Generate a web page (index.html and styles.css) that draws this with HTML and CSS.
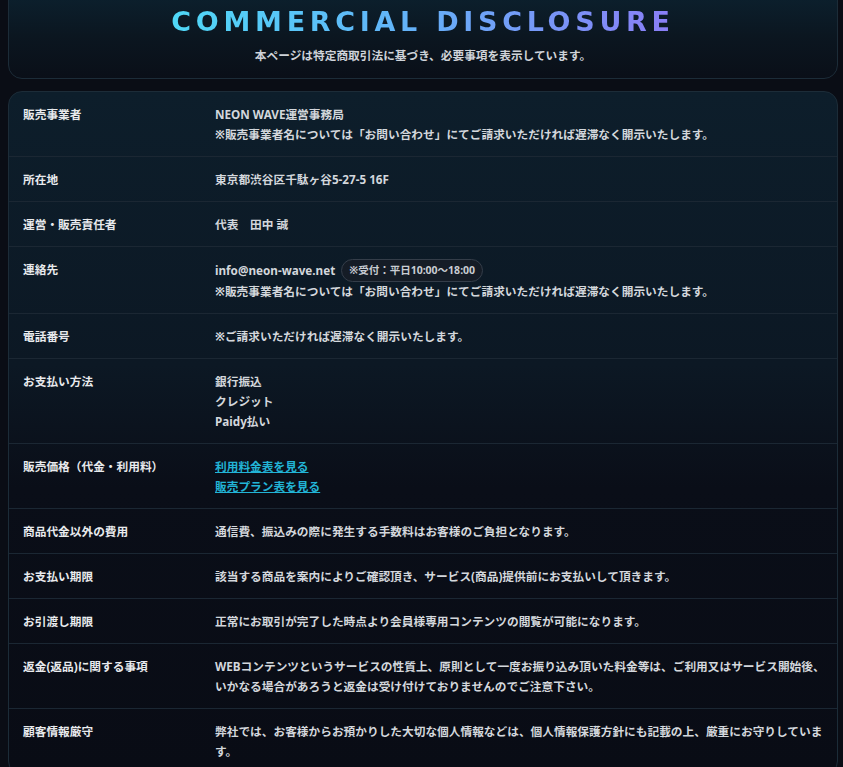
FILE: index.html
```html
<html>
  <head>
    <meta charset="utf-8">
    <link rel="stylesheet" href="styles.css">
  </head>
  <body>
    <div class="page">
      <div class="hero">
        <h1 class="hero-title">COMMERCIAL DISCLOSURE</h1>
        <p class="hero-sub">本ページは特定商取引法に基づき、必要事項を表示しています。</p>
      </div>

      <div class="table">
        <div class="row">
          <div class="label">販売事業者</div>
          <div class="value">
            <div>NEON WAVE運営事務局</div>
            <div>※販売事業者名については「お問い合わせ」にてご請求いただければ遅滞なく開示いたします。</div>
          </div>
        </div>
        <div class="row">
          <div class="label">所在地</div>
          <div class="value">東京都渋谷区千駄ヶ谷5-27-5 16F</div>
        </div>
        <div class="row">
          <div class="label">運営・販売責任者</div>
          <div class="value">代表　田中 誠</div>
        </div>
        <div class="row">
          <div class="label">連絡先</div>
          <div class="value">
            <div class="contact">info@neon-wave.net <span class="pill">※受付：平日10:00〜18:00</span></div>
            <div>※販売事業者名については「お問い合わせ」にてご請求いただければ遅滞なく開示いたします。</div>
          </div>
        </div>
        <div class="row">
          <div class="label">電話番号</div>
          <div class="value">※ご請求いただければ遅滞なく開示いたします。</div>
        </div>
        <div class="row">
          <div class="label">お支払い方法</div>
          <div class="value">
            <div>銀行振込</div>
            <div>クレジット</div>
            <div>Paidy払い</div>
          </div>
        </div>
        <div class="row">
          <div class="label">販売価格（代金・利用料）</div>
          <div class="value">
            <div><a class="link" href="#">利用料金表を見る</a></div>
            <div><a class="link" href="#">販売プラン表を見る</a></div>
          </div>
        </div>
        <div class="row">
          <div class="label">商品代金以外の費用</div>
          <div class="value">通信費、振込みの際に発生する手数料はお客様のご負担となります。</div>
        </div>
        <div class="row">
          <div class="label">お支払い期限</div>
          <div class="value">該当する商品を案内によりご確認頂き、サービス(商品)提供前にお支払いして頂きます。</div>
        </div>
        <div class="row">
          <div class="label">お引渡し期限</div>
          <div class="value">正常にお取引が完了した時点より会員様専用コンテンツの閲覧が可能になります。</div>
        </div>
        <div class="row">
          <div class="label">返金(返品)に関する事項</div>
          <div class="value">WEBコンテンツというサービスの性質上、原則として一度お振り込み頂いた料金等は、ご利用又はサービス開始後、いかなる場合があろうと返金は受け付けておりませんのでご注意下さい。</div>
        </div>
        <div class="row">
          <div class="label">顧客情報厳守</div>
          <div class="value">弊社では、お客様からお預かりした大切な個人情報などは、個人情報保護方針にも記載の上、厳重にお守りしています。</div>
        </div>
      </div>
    </div>
  </body>
</html>
```

FILE: styles.css
```css
body {
  margin: 0;
  background-color: #0a0d15;
  color: #d6dae0;
  font-family: "Noto Sans", "Noto Sans CJK JP", sans-serif;
  overflow: hidden;
}
.page {
  margin: 0 5px 0 8px;
}
.hero {
  margin-top: -14px;
  padding: 17px 0 14px;
  border: 1px solid #1c2c38;
  border-radius: 14px;
  background: linear-gradient(180deg, #0c2230 0%, #0b1620 55%, #0a0f18 100%);
  text-align: center;
}
.hero-title {
  margin: 0;
  font-family: "DejaVu Sans", sans-serif;
  font-size: 27px;
  line-height: 36px;
  font-weight: 600;
  letter-spacing: 4.7px;
  background: linear-gradient(90deg, #4fd8f7 0%, #62b4f8 45%, #8a7df6 100%);
  -webkit-background-clip: text;
  background-clip: text;
  color: transparent;
  display: inline-block;
}
.hero-sub {
  margin: 6px 0 0;
  font-size: 11.7px;
  line-height: 18px;
  font-weight: 700;
  color: #cfd3d9;
}
.table {
  margin-top: 12px;
  border: 1px solid #1c2c38;
  border-radius: 14px;
  overflow: hidden;
  background: linear-gradient(180deg, #0d1e2b 0%, #0c1824 40%, #0a0e18 58%, #090c15 100%);
}
.row {
  display: grid;
  grid-template-columns: 192px 1fr;
  border-bottom: 1px solid #1b2733;
  font-size: 11.7px;
  line-height: 20px;
  font-weight: 700;
}
.label {
  padding: 12px 14px;
  color: #e8eaed;
}
.value {
  padding: 12px 12px 12px 14px;
  color: #d3d7dc;
}
.contact {
  display: flex;
  align-items: center;
  gap: 6px;
  height: 22px;
}
.pill {
  display: inline-block;
  padding: 0 7px;
  height: 21px;
  line-height: 21px;
  font-size: 10.5px;
  border: 1px solid #343d49;
  border-radius: 12px;
  background-color: #151c26;
  color: #c9cdd3;
}
.link {
  color: #22b4d6;
  text-decoration: underline;
}
```
